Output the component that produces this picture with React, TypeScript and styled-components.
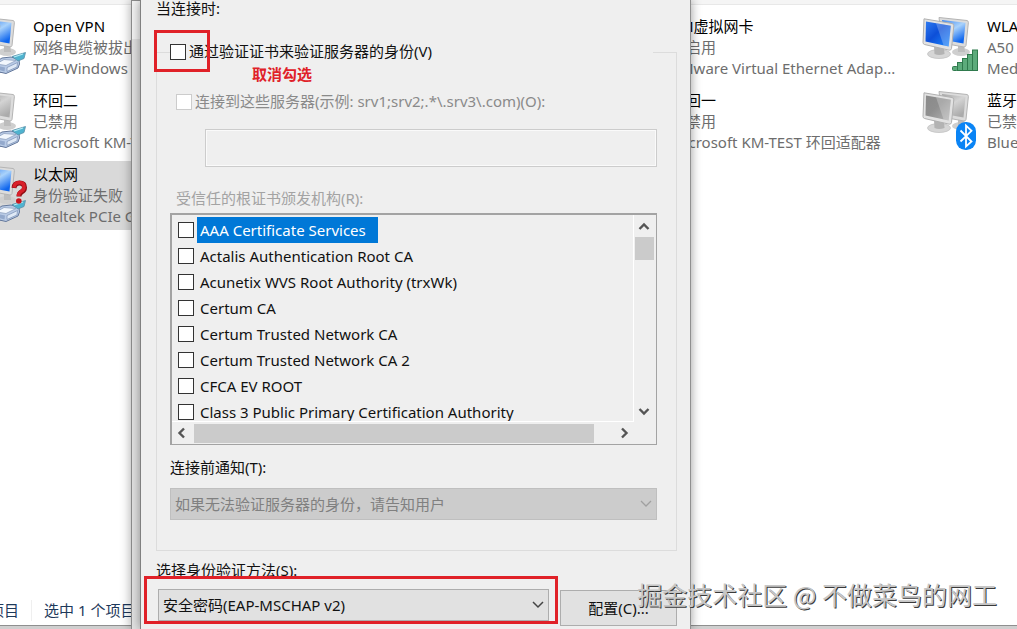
import React from "react";
import styled, { createGlobalStyle, css } from "styled-components";

const GlobalStyle = createGlobalStyle`
  * { box-sizing: border-box; }
  html, body { margin: 0; padding: 0; }
  body {
    background: #ffffff;
    color: #111111;
    font-family: "Noto Sans", "Noto Sans CJK SC", sans-serif;
    font-size: 15px;
    line-height: 21px;
    overflow: hidden;
  }
  button, input, select { font: inherit; color: inherit; margin: 0; }
`;

const RED = "#e02128";

const Desktop = styled.div`
  position: relative;
  min-height: 100vh;
  display: flex;
  flex-direction: column;
  overflow: hidden;
`;

/* ---------- Explorer window ---------- */

const Explorer = styled.main`
  flex: 1;
  display: flex;
  flex-direction: column;
  border-bottom: 3px solid #cfcfcf;
`;

const ToolbarEdge = styled.div`
  height: 5px;
  background: #f5f5f5;
  border-bottom: 1px solid #e8e8e8;
`;

const Connections = styled.ul`
  flex: 1;
  list-style: none;
  margin: 0 0 0 -36px;
  padding: 8px 0 0;
  display: grid;
  grid-template-columns: 318px 320px 316px 318px;
  grid-auto-rows: 69px;
  row-gap: 5px;
`;

const Connection = styled.li<{ $column: number; $row: number; $selected?: boolean }>`
  grid-column: ${(p) => p.$column};
  grid-row: ${(p) => p.$row};
  display: flex;
  gap: 3px;
  background: ${(p) => (p.$selected ? "#d9d9d9" : "transparent")};
`;

const ConnectionIcon = styled.svg`
  flex: none;
  width: 66px;
  height: 69px;
`;

const ConnectionText = styled.div`
  min-width: 0;
  flex: 1;
  padding: 3px 0;
`;

const ConnectionLine = styled.div<{ $name?: boolean }>`
  color: ${(p) => (p.$name ? "#000000" : "#6d6d6d")};
  white-space: nowrap;
  overflow: hidden;
`;

const StatusBar = styled.footer`
  display: flex;
  align-items: center;
  height: 30px;
  color: #1e395b;
  border-bottom: 1px solid #8f8f8f;
  white-space: nowrap;
`;

const StatusItem = styled.span`
  margin-left: -26px;
  & + & {
    margin-left: 12px;
    padding-left: 12px;
    border-left: 1px solid #efefef;
  }
`;

/* ---------- Dialogs ---------- */

const BackDialog = styled.div`
  position: absolute;
  top: 0;
  bottom: 0;
  left: 131px;
  width: 24px;
  border-left: 1px solid #8c8c8c;
  border-top: 1px solid #8c8c8c;
  background: linear-gradient(#f4f4f4 38px, #e2e2e2 38px);
  box-shadow: -2px 0 10px rgba(0, 0, 0, 0.25);
`;

const Dialog = styled.form`
  position: absolute;
  top: 0;
  bottom: 0;
  left: 140px;
  right: 326px;
  padding: 0 13px 0 15px;
  background: #efefef;
  border-left: 1px solid #808080;
  border-right: 1px solid #909090;
  box-shadow: 0 0 10px rgba(0, 0, 0, 0.4);
`;

const Heading = styled.div`
  line-height: 16px;
`;

const Group = styled.fieldset`
  min-width: 0;
  margin: 25px 0 0;
  padding: 0 19px 30px 13px;
  border: 1px solid #dcdcdc;
`;

const Legend = styled.legend`
  width: calc(100% - 4px);
  height: 22px;
  padding: 0;
`;

const CheckLabel = styled.label<{ $disabled?: boolean; $indent?: boolean }>`
  display: flex;
  align-items: center;
  gap: 3px;
  padding-left: ${(p) => (p.$indent ? 6 : 0)}px;
  color: ${(p) => (p.$disabled ? "#8a8a8a" : "#111111")};
  white-space: nowrap;
`;

const CheckBox = styled.input.attrs({ type: "checkbox" })`
  appearance: none;
  flex: none;
  width: 16px;
  height: 16px;
  border: 1px solid #333333;
  background: #ffffff;
  &:disabled { border-color: #cccccc; }
`;

const ServerRow = styled.div`
  margin-top: 28px;
`;

const ServerInput = styled.input`
  display: block;
  width: calc(100% - 35px);
  height: 38px;
  margin: 17px 0 0 35px;
  padding: 0 6px;
  border: 1px solid #cccccc;
  background: #efefef;
  box-shadow: inset 0 0 0 1px #fafafa;
`;

const FieldLabel = styled.label`
  display: block;
`;

const AuthoritiesLabel = styled.div`
  margin: 21px 0 4px 6px;
  color: #a3a3a3;
`;

const ListBox = styled.div`
  display: grid;
  grid-template-columns: 1fr 22px;
  grid-template-rows: 207px 22px;
  border: 2px solid #a3a3a3;
  border-right-width: 1px;
  border-bottom-width: 1px;
  margin-bottom: 12px;
`;

const ListItems = styled.ul`
  list-style: none;
  margin: 0;
  padding: 2px 0 0 6px;
  overflow: hidden;
  border-right: 1px solid #ffffff;
  border-bottom: 1px solid #ffffff;
`;

const ListItem = styled.label`
  display: flex;
  align-items: center;
  height: 26px;
  gap: 3px;
`;

const ItemText = styled.span<{ $selected?: boolean }>`
  height: 26px;
  line-height: 26px;
  padding: 0 12px 0 3px;
  white-space: nowrap;
  ${(p) => p.$selected && css`
    background: #0078d7;
    color: #ffffff;
  `}
`;

const VerticalBar = styled.div`
  display: flex;
  flex-direction: column;
  align-items: center;
  padding: 2px 2px 1px 0;
`;

const HorizontalBar = styled.div`
  display: flex;
  align-items: center;
`;

const ScrollButton = styled.button`
  flex: none;
  width: 20px;
  height: 20px;
  padding: 0;
  border: 0;
  background: transparent;
  display: grid;
  place-items: center;
`;

const Thumb = styled.div<{ $vertical?: boolean }>`
  background: #cbcbcb;
  ${(p) => p.$vertical
    ? css`width: 19px; height: 23px; margin-bottom: auto;`
    : css`flex: 1; height: 19px; margin: 0 20px 0 2px;`}
`;

const SelectWrap = styled.div`
  position: relative;
  flex: 1;
`;

const Select = styled.select<{ $tone: "muted" | "normal" }>`
  display: block;
  appearance: none;
  width: 100%;
  height: 32px;
  padding: 0 30px 0 4px;
  border: 1px solid ${(p) => (p.$tone === "muted" ? "#bfbfbf" : "#adadad")};
  border-radius: 0;
  background: ${(p) => (p.$tone === "muted" ? "#cccccc" : "#e1e1e1")};
  color: ${(p) => (p.$tone === "muted" ? "#808080" : "#111111")};
  opacity: 1;
`;

const SelectArrow = styled.svg`
  position: absolute;
  top: 12px;
  right: 5px;
  width: 12px;
  height: 8px;
  pointer-events: none;
`;

const NotifyField = styled.div`
  display: flex;
  flex-direction: column;
  gap: 10px;
`;

const MethodField = styled.div`
  margin-top: 9px;
`;

const MethodRow = styled.div`
  display: flex;
  align-items: flex-start;
  gap: 11px;
  margin-top: 8px;
  padding-left: 2px;
`;

const ConfigButton = styled.button`
  width: 117px;
  height: 36px;
  margin-top: 1px;
  padding: 0;
  border: 1px solid #adadad;
  background: #e1e1e1;
`;

/* ---------- Annotations ---------- */

const CheckCallout = styled.div`
  position: absolute;
  top: 30px;
  left: 13px;
  width: 56px;
  height: 42px;
  border: 3px solid ${RED};
`;

const CalloutText = styled.strong`
  position: absolute;
  top: 64px;
  left: 111px;
  color: ${RED};
`;

const SelectCallout = styled.div`
  position: absolute;
  inset: -13px -9px -3px -14px;
  border: 3px solid ${RED};
  pointer-events: none;
`;

const Watermark = styled.div`
  position: absolute;
  right: 20px;
  bottom: 17px;
  font-family: "Noto Sans CJK SC", sans-serif;
  font-size: 25px;
  line-height: 36px;
  color: #c6c6c6;
  text-shadow: 1px 1px 0 #3a3a3a;
  white-space: nowrap;
`;

/* ---------- Drawings ---------- */

type Badge = "cable" | "signal" | "bluetooth" | "none";

function NetworkIcon({ id, active, badge, alert }: { id: string; active?: boolean; badge: Badge; alert?: boolean }) {
  const front = `front-${id}`;
  const back = `back-${id}`;
  return (
    <ConnectionIcon viewBox="0 0 66 69" aria-hidden="true">
      <defs>
        <linearGradient id={front} x1="0" y1="0" x2="1" y2="1">
          <stop offset="0" stopColor={active ? "#2f7bf0" : "#8a8a8a"} />
          <stop offset="0.45" stopColor={active ? "#0d4fd8" : "#8f8f8f"} />
          <stop offset="1" stopColor={active ? "#1f8bff" : "#b4b4b4"} />
        </linearGradient>
        <linearGradient id={back} x1="0" y1="0" x2="0.6" y2="1">
          <stop offset="0" stopColor={active ? "#3f86ee" : "#a5a5a5"} />
          <stop offset="0.5" stopColor={active ? "#a9d2fb" : "#d4d4d4"} />
          <stop offset="1" stopColor={active ? "#0f66ee" : "#ababab"} />
        </linearGradient>
      </defs>
      <ellipse cx="43" cy="39" rx="9" ry="4" fill="#cfcfcf" />
      <path d="M40 32h6l1 7h-7z" fill="#bdbdbd" />
      <path d="M21 4.500 49 7.500Q50.500 8 50.400 9.500L48 32.500Q47.500 34 46 34L24 30z" fill="#dcdcdc" stroke="#b4b4b4" />
      <path d="M24 7 47.500 9.700 45.500 30.500 26 27z" fill={`url(#${back})`} />
      <ellipse cx="21" cy="41" rx="11.500" ry="4.500" fill="#d6d6d6" stroke="#bcbcbc" strokeWidth="0.700" />
      <path d="M16 33 26 35 26.500 41Q21 43 16.500 41z" fill="#b3b3b3" />
      <path d="M6 5.800 34 10.500Q36 11 35.800 12.800L33.500 35.500Q33 37.500 31.200 37.200L6.500 31.500Q5 31 5 29.500z" fill="#e2e2e2" stroke="#b0b0b0" />
      <path d="M8 8.500 32.800 12.800 30.700 33.500 7.500 28.500z" fill={`url(#${front})`} />
      <path d="M18 10.300 32.800 12.800 30.700 33.500 25.500 32.300z" fill="#ffffff" opacity="0.240" />
      {badge === "signal" && (
        <g fill="#5cab7b" stroke="#2f7a4d" strokeWidth="1">
          <rect x="34.500" y="53.500" width="5" height="4" rx="1" />
          <rect x="39.500" y="49.500" width="5" height="8" />
          <rect x="44.500" y="45.500" width="5" height="12" />
          <rect x="49.500" y="41.500" width="5" height="16" />
          <rect x="54.500" y="37" width="5" height="20.500" />
        </g>
      )}
      {badge === "bluetooth" && (
        <g>
          <rect x="38" y="35" width="20" height="28" rx="9.500" fill="#0a84f5" />
          <path d="M42.500 43.500 53.500 54.500 48 59.500V38.500L53.500 43.800 42.500 54.500" fill="none" stroke="#ffffff" strokeWidth="1.800" />
        </g>
      )}
      {badge === "cable" && (
        <g strokeLinejoin="round">
          <path d="M24 54Q36 62 46 56" fill="none" stroke="#8d9fb8" strokeWidth="3" />
          <path d="M30 50 38 45 47 44 55 46.500 55.500 51 54 55 42 60.500 31 58z" fill="#b9cbe6" stroke="#64789b" />
          <path d="M32 51 40 46.500 52 47.500 42 52.500z" fill="#f2f7fd" stroke="#8fa2c0" strokeWidth="0.800" />
          <path d="M43 54.500 53.500 49.500 53 54 43 58.500z" fill="#dfe9f6" stroke="#8398bb" strokeWidth="0.800" />
          <path d="M33 53 41 54.500 40.500 58.500 33 56.500z" fill="#93a9cc" />
          <path d="M48 43.500 61.500 39.500 60 45.500 54 48z" fill="#4fb3cf" stroke="#5b8fa8" strokeWidth="0.800" />
          <path d="M50 44 59 41" stroke="#b7ecf5" strokeWidth="1.200" />
        </g>
      )}
      {alert && (
        <g fill="none">
          <path d="M50 27Q50.500 22 55.500 22 60.500 22 60.500 26.500 60.500 29.500 57.500 31 55 32.500 55 35.500" stroke="#8e0d13" strokeWidth="5" />
          <path d="M50 26.500Q50.500 21.500 55.500 21.500 60 21.500 60 26 60 29 57 30.500 54.500 32 54.500 35" stroke="#d9202a" strokeWidth="3.600" />
          <circle cx="54.800" cy="40" r="2.800" fill="#c8141c" />
        </g>
      )}
    </ConnectionIcon>
  );
}

function Chevron({ direction }: { direction: "up" | "down" | "left" | "right" }) {
  const paths = {
    up: "M1.500 8 6 3.500 10.500 8",
    down: "M1.500 4 6 8.500 10.500 4",
    left: "M8 1.500 3.500 6 8 10.500",
    right: "M4 1.500 8.500 6 4 10.500",
  };
  return (
    <svg width="12" height="12" viewBox="0 0 12 12" aria-hidden="true">
      <path d={paths[direction]} fill="none" stroke="#555555" strokeWidth="2.400" />
    </svg>
  );
}

/* ---------- Data ---------- */

const connections: {
  column: number; row: number; name: string; status: string; device: string;
  badge: Badge; active?: boolean; alert?: boolean; selected?: boolean;
}[] = [
  { column: 1, row: 1, name: "Open VPN", status: "网络电缆被拔出", device: "TAP-Windows Adapter V9", badge: "cable", active: true },
  { column: 1, row: 2, name: "环回二", status: "已禁用", device: "Microsoft KM-TEST 环回适配器", badge: "cable" },
  { column: 1, row: 3, name: "以太网", status: "身份验证失败", device: "Realtek PCIe GbE Family", badge: "cable", active: true, alert: true, selected: true },
  { column: 3, row: 1, name: "VM虚拟网卡", status: "已启用", device: "VMware Virtual Ethernet Adap...", badge: "none", active: true },
  { column: 3, row: 2, name: "环回一", status: "已禁用", device: "Microsoft KM-TEST 环回适配器", badge: "none" },
  { column: 4, row: 1, name: "WLAN", status: "A50", device: "MediaTek", badge: "signal", active: true },
  { column: 4, row: 2, name: "蓝牙网络连接", status: "已禁用", device: "Bluetooth", badge: "bluetooth" },
];

const authorities = [
  "AAA Certificate Services",
  "Actalis Authentication Root CA",
  "Acunetix WVS Root Authority (trxWk)",
  "Certum CA",
  "Certum Trusted Network CA",
  "Certum Trusted Network CA 2",
  "CFCA EV ROOT",
  "Class 3 Public Primary Certification Authority",
];

export default function App() {
  return (
    <Desktop>
      <GlobalStyle />
      <Explorer>
        <ToolbarEdge />
        <Connections>
          {connections.map((c) => (
            <Connection key={`${c.column}-${c.row}`} $column={c.column} $row={c.row} $selected={c.selected}>
              <NetworkIcon id={`${c.column}-${c.row}`} active={c.active} badge={c.badge} alert={c.alert} />
              <ConnectionText>
                <ConnectionLine $name>{c.name}</ConnectionLine>
                <ConnectionLine>{c.status}</ConnectionLine>
                <ConnectionLine>{c.device}</ConnectionLine>
              </ConnectionText>
            </Connection>
          ))}
        </Connections>
        <StatusBar>
          <StatusItem>个项目</StatusItem>
          <StatusItem>选中 1 个项目</StatusItem>
        </StatusBar>
      </Explorer>

      <BackDialog />
      <Dialog onSubmit={(e) => e.preventDefault()}>
        <Heading>当连接时:</Heading>
        <Group>
          <Legend>
            <CheckLabel>
              <CheckBox />
              通过验证证书来验证服务器的身份(V)
            </CheckLabel>
          </Legend>
          <ServerRow>
            <CheckLabel $disabled $indent>
              <CheckBox disabled />
              {"连接到这些服务器(示例: srv1;srv2;.*\\.srv3\\.com)(O):"}
            </CheckLabel>
            <ServerInput disabled aria-label="服务器" />
          </ServerRow>
          <AuthoritiesLabel id="authorities">受信任的根证书颁发机构(R):</AuthoritiesLabel>
          <ListBox role="group" aria-labelledby="authorities">
            <ListItems>
              {authorities.map((name, i) => (
                <li key={name}>
                  <ListItem>
                    <CheckBox />
                    <ItemText $selected={i === 0}>{name}</ItemText>
                  </ListItem>
                </li>
              ))}
            </ListItems>
            <VerticalBar>
              <ScrollButton type="button" aria-label="向上"><Chevron direction="up" /></ScrollButton>
              <Thumb $vertical />
              <ScrollButton type="button" aria-label="向下"><Chevron direction="down" /></ScrollButton>
            </VerticalBar>
            <HorizontalBar>
              <ScrollButton type="button" aria-label="向左"><Chevron direction="left" /></ScrollButton>
              <Thumb />
              <ScrollButton type="button" aria-label="向右"><Chevron direction="right" /></ScrollButton>
            </HorizontalBar>
          </ListBox>
          <NotifyField>
            <FieldLabel htmlFor="notify">连接前通知(T):</FieldLabel>
            <SelectWrap>
              <Select id="notify" disabled $tone="muted">
                <option>如果无法验证服务器的身份，请告知用户</option>
              </Select>
              <SelectArrow viewBox="0 0 12 8"><path d="M1 1 6 6 11 1" fill="none" stroke="#a0a0a0" strokeWidth="1.300" /></SelectArrow>
            </SelectWrap>
          </NotifyField>
        </Group>
        <MethodField>
          <FieldLabel htmlFor="method">选择身份验证方法(S):</FieldLabel>
          <MethodRow>
            <SelectWrap>
              <Select id="method" $tone="normal">
                <option>安全密码(EAP-MSCHAP v2)</option>
              </Select>
              <SelectArrow viewBox="0 0 12 8"><path d="M1 1 6 6 11 1" fill="none" stroke="#444444" strokeWidth="1.500" /></SelectArrow>
              <SelectCallout />
            </SelectWrap>
            <ConfigButton type="button">配置(C)...</ConfigButton>
          </MethodRow>
        </MethodField>
        <CheckCallout />
        <CalloutText>取消勾选</CalloutText>
      </Dialog>
      <Watermark>掘金技术社区 @ 不做菜鸟的网工</Watermark>
    </Desktop>
  );
}
